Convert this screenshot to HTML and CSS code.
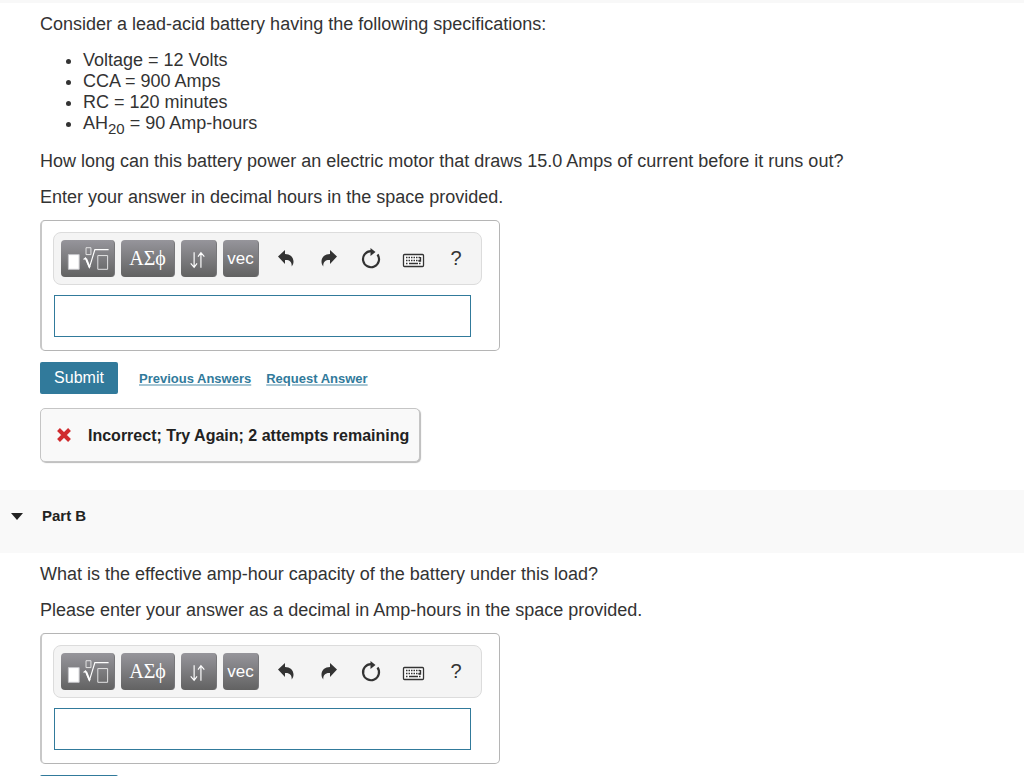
FILE: index.html
```html
<!DOCTYPE html>
<html lang="en">
  <head>
    <meta charset="UTF-8" />
    <meta name="viewport" content="width=device-width, initial-scale=1.0" />
    <title>Lead-acid battery</title>
    <link rel="stylesheet" href="styles.css">
  </head>
  <body>
    <!-- shared toolbar icons -->
    <svg class="sprite" aria-hidden="true">
      <symbol id="icon-template" viewBox="0 0 54 36">
        <path d="M7.500 13.500h11v15h-11z" fill="#fff" stroke="#c5c5c9" />
        <path d="M25.500 6.500h5v7h-5zM37.500 14.500h10v14h-10z" fill="none" stroke="#e4e4e6" />
        <path d="M23 18.500l2-1.500 4 9.500 5.500-18h14" fill="none" stroke="#fff" stroke-width="1.200" />
        <path d="M25.500 17.500l3.700 9" stroke="#fff" stroke-width="2" />
      </symbol>
      <symbol id="icon-arrows" viewBox="0 0 36 36">
        <path d="M13.500 11v15.500M10 22.500l3.500 4 3-4M20.500 27V11.500M17.500 15.500l3-4 3.500 4" fill="none" stroke="#fff" stroke-width="1.200" />
      </symbol>
      <symbol id="icon-undo" viewBox="0 0 36 36">
        <path d="M10 16.500L17 10v4c5 0 8.500 3 8.500 7.500 0 2-.6 3.500-1.800 5 .3-4.500-2-6.800-6.700-6.500v4z" />
      </symbol>
      <symbol id="icon-redo" viewBox="0 0 36 36">
        <path d="M26 16.500L19 10v4c-5 0-8.500 3-8.500 7.500 0 2 .6 3.500 1.800 5-.3-4.500 2-6.800 6.700-6.500v4z" />
      </symbol>
      <symbol id="icon-reset" viewBox="0 0 36 36">
        <path d="M24.500 14.500a8 8 0 1 1-6.500-3.300" fill="none" stroke="#333" stroke-width="2.200" />
        <path d="M17.500 8l5 4-5 4z" />
      </symbol>
      <symbol id="icon-keyboard" viewBox="0 0 36 36">
        <rect x="7.500" y="14.500" width="20" height="12" rx="1" fill="#fff" stroke="#333" stroke-width="1.300" />
        <path d="M10 17.500h15M10 20.500h15M10 23.500h2M23 23.500h2" stroke="#333" stroke-width="1.500" stroke-dasharray="1.500 1" />
        <path d="M13 23.500h9M24.500 17v4h-2" fill="none" stroke="#333" stroke-width="1.400" />
      </symbol>
    </svg>

    <main>
      <section class="part first-part">
        <div class="content">
          <p>Consider a lead-acid battery having the following specifications:</p>
          <ul>
            <li>Voltage = 12 Volts</li>
            <li>CCA = 900 Amps</li>
            <li>RC = 120 minutes</li>
            <li>AH<sub>20</sub> = 90 Amp-hours</li>
          </ul>
          <p>How long can this battery power an electric motor that draws 15.0 Amps of current before it runs out?</p>
          <p>Enter your answer in decimal hours in the space provided.</p>
          <form class="answer-form">
            <div class="answer-box">
              <div class="toolbar">
                <button type="button" class="tool wide" aria-label="Templates"><svg><use href="#icon-template" /></svg></button>
                <button type="button" class="tool wide greek">ΑΣϕ</button>
                <button type="button" class="tool" aria-label="Subscript and superscript"><svg><use href="#icon-arrows" /></svg></button>
                <button type="button" class="tool">vec</button>
                <div class="actions">
                  <button type="button" aria-label="Undo"><svg><use href="#icon-undo" /></svg></button>
                  <button type="button" aria-label="Redo"><svg><use href="#icon-redo" /></svg></button>
                  <button type="button" aria-label="Reset"><svg><use href="#icon-reset" /></svg></button>
                  <button type="button" aria-label="Keyboard shortcuts"><svg><use href="#icon-keyboard" /></svg></button>
                  <button type="button" class="help">?</button>
                </div>
              </div>
              <input type="text" class="answer" aria-label="Answer for Part A" />
            </div>
            <div class="submit-row">
              <button type="submit" class="submit">Submit</button>
              <a href="#previous">Previous Answers</a>
              <a href="#request">Request Answer</a>
            </div>
          </form>
          <div class="feedback">
            <svg viewBox="0 0 16 16" aria-hidden="true"><path d="M2.500 2.500l11 11M13.500 2.500l-11 11" /></svg>
            <strong>Incorrect; Try Again; 2 attempts remaining</strong>
          </div>
        </div>
      </section>

      <section class="part">
        <header class="part-header">
          <span class="caret"></span>
          <h2>Part B</h2>
        </header>
        <div class="content">
          <p>What is the effective amp-hour capacity of the battery under this load?</p>
          <p>Please enter your answer as a decimal in Amp-hours in the space provided.</p>
          <form class="answer-form">
            <div class="answer-box">
              <div class="toolbar">
                <button type="button" class="tool wide" aria-label="Templates"><svg><use href="#icon-template" /></svg></button>
                <button type="button" class="tool wide greek">ΑΣϕ</button>
                <button type="button" class="tool" aria-label="Subscript and superscript"><svg><use href="#icon-arrows" /></svg></button>
                <button type="button" class="tool">vec</button>
                <div class="actions">
                  <button type="button" aria-label="Undo"><svg><use href="#icon-undo" /></svg></button>
                  <button type="button" aria-label="Redo"><svg><use href="#icon-redo" /></svg></button>
                  <button type="button" aria-label="Reset"><svg><use href="#icon-reset" /></svg></button>
                  <button type="button" aria-label="Keyboard shortcuts"><svg><use href="#icon-keyboard" /></svg></button>
                  <button type="button" class="help">?</button>
                </div>
              </div>
              <input type="text" class="answer" aria-label="Answer for Part B" />
            </div>
            <div class="submit-row">
              <button type="submit" class="submit">Submit</button>
            </div>
          </form>
        </div>
      </section>
    </main>
  </body>
</html>
```
FILE: styles.css
```css
* {
  box-sizing: border-box;
}
body {
  margin: 0;
  height: 100vh;
  overflow: hidden;
  background: #fff;
  color: #333;
  font-family: "Liberation Sans", Arial, sans-serif;
  font-size: 18px;
  line-height: 21px;
}
main {
  height: 100%;
  overflow-y: auto;
  scrollbar-width: none;
}
.sprite {
  display: none;
}
.first-part {
  border-top: 3px solid #f8f8f8;
}
.content {
  padding: 11px 40px 28px;
}
p {
  margin: 0 0 15px;
}
ul {
  margin: 0 0 17px;
  padding-left: 43px;
}
sub {
  font-size: 15px;
  line-height: 0;
}
button {
  padding: 0;
  border: none;
  font-family: inherit;
  cursor: pointer;
}
.answer-form {
  margin-top: -3px;
}
.answer-box {
  max-width: 460px;
  padding: 11px 17px 13px 11px;
  border: 1px solid #b5b5b5;
  border-left: 2px solid #c8c8c8;
  border-radius: 5px;
}
.toolbar {
  display: flex;
  gap: 6px;
  height: 53px;
  padding: 7px;
  border: 1px solid #dcdcdc;
  border-radius: 8px;
  background: #f4f4f4;
}
.tool {
  width: 54px;
  height: 37px;
  border-right: 1px solid #77777a;
  border-radius: 4px;
  background: linear-gradient(#96959b, #626262);
  color: #fff;
  font-size: 17px;
}
.tool:not(.wide) {
  width: 36px;
}
.tool svg,
.actions svg {
  display: block;
  width: 100%;
  height: 36px;
}
.tool.greek {
  font-family: "Liberation Serif", "Times New Roman", serif;
  font-size: 20px;
}
.actions {
  display: flex;
  flex: 1;
  justify-content: space-between;
  margin-left: 3px;
}
.actions button {
  width: 36px;
  height: 36px;
  background: none;
  color: #333;
  fill: #333;
}
.actions .help {
  font-size: 20px;
}
.answer {
  display: block;
  width: calc(100% - 12px);
  height: 42px;
  margin: 10px 0 0 1px;
  padding: 0 8px;
  border: 1px solid #317a9b;
  background: #fff;
  font-size: 18px;
}
.submit-row {
  display: flex;
  align-items: center;
  margin-top: 11px;
}
.submit {
  width: 78px;
  height: 32px;
  margin-right: 21px;
  border-radius: 2px;
  background: #317a9b;
  color: #fff;
  font-size: 16px;
}
a {
  margin-right: 15px;
  color: #317a9b;
  font-size: 13px;
  font-weight: bold;
  text-decoration-color: #a5c5d3;
  text-decoration-thickness: 2px;
}
.feedback {
  display: flex;
  align-items: center;
  width: fit-content;
  height: 54px;
  margin-top: 14px;
  padding: 0 10px 0 15px;
  border: 1px solid #c5c5c5;
  border-radius: 5px;
  background: #f9f9f9;
  box-shadow: 1px 1px 1px #bbb;
  color: #222;
  font-size: 16px;
}
.feedback svg {
  width: 16px;
  height: 16px;
  margin-right: 16px;
  fill: none;
  stroke: #d02b2e;
  stroke-width: 4;
}
.part-header {
  display: flex;
  align-items: flex-start;
  height: 63px;
  padding: 15px 11px;
  background: #f9f9f9;
  color: #222;
}
.caret {
  margin: 8px 19px 0 0;
  border: 6px solid transparent;
  border-top: 7px solid #222;
  border-bottom: none;
}
h2 {
  margin: 0;
  font-size: 15px;
}
```
